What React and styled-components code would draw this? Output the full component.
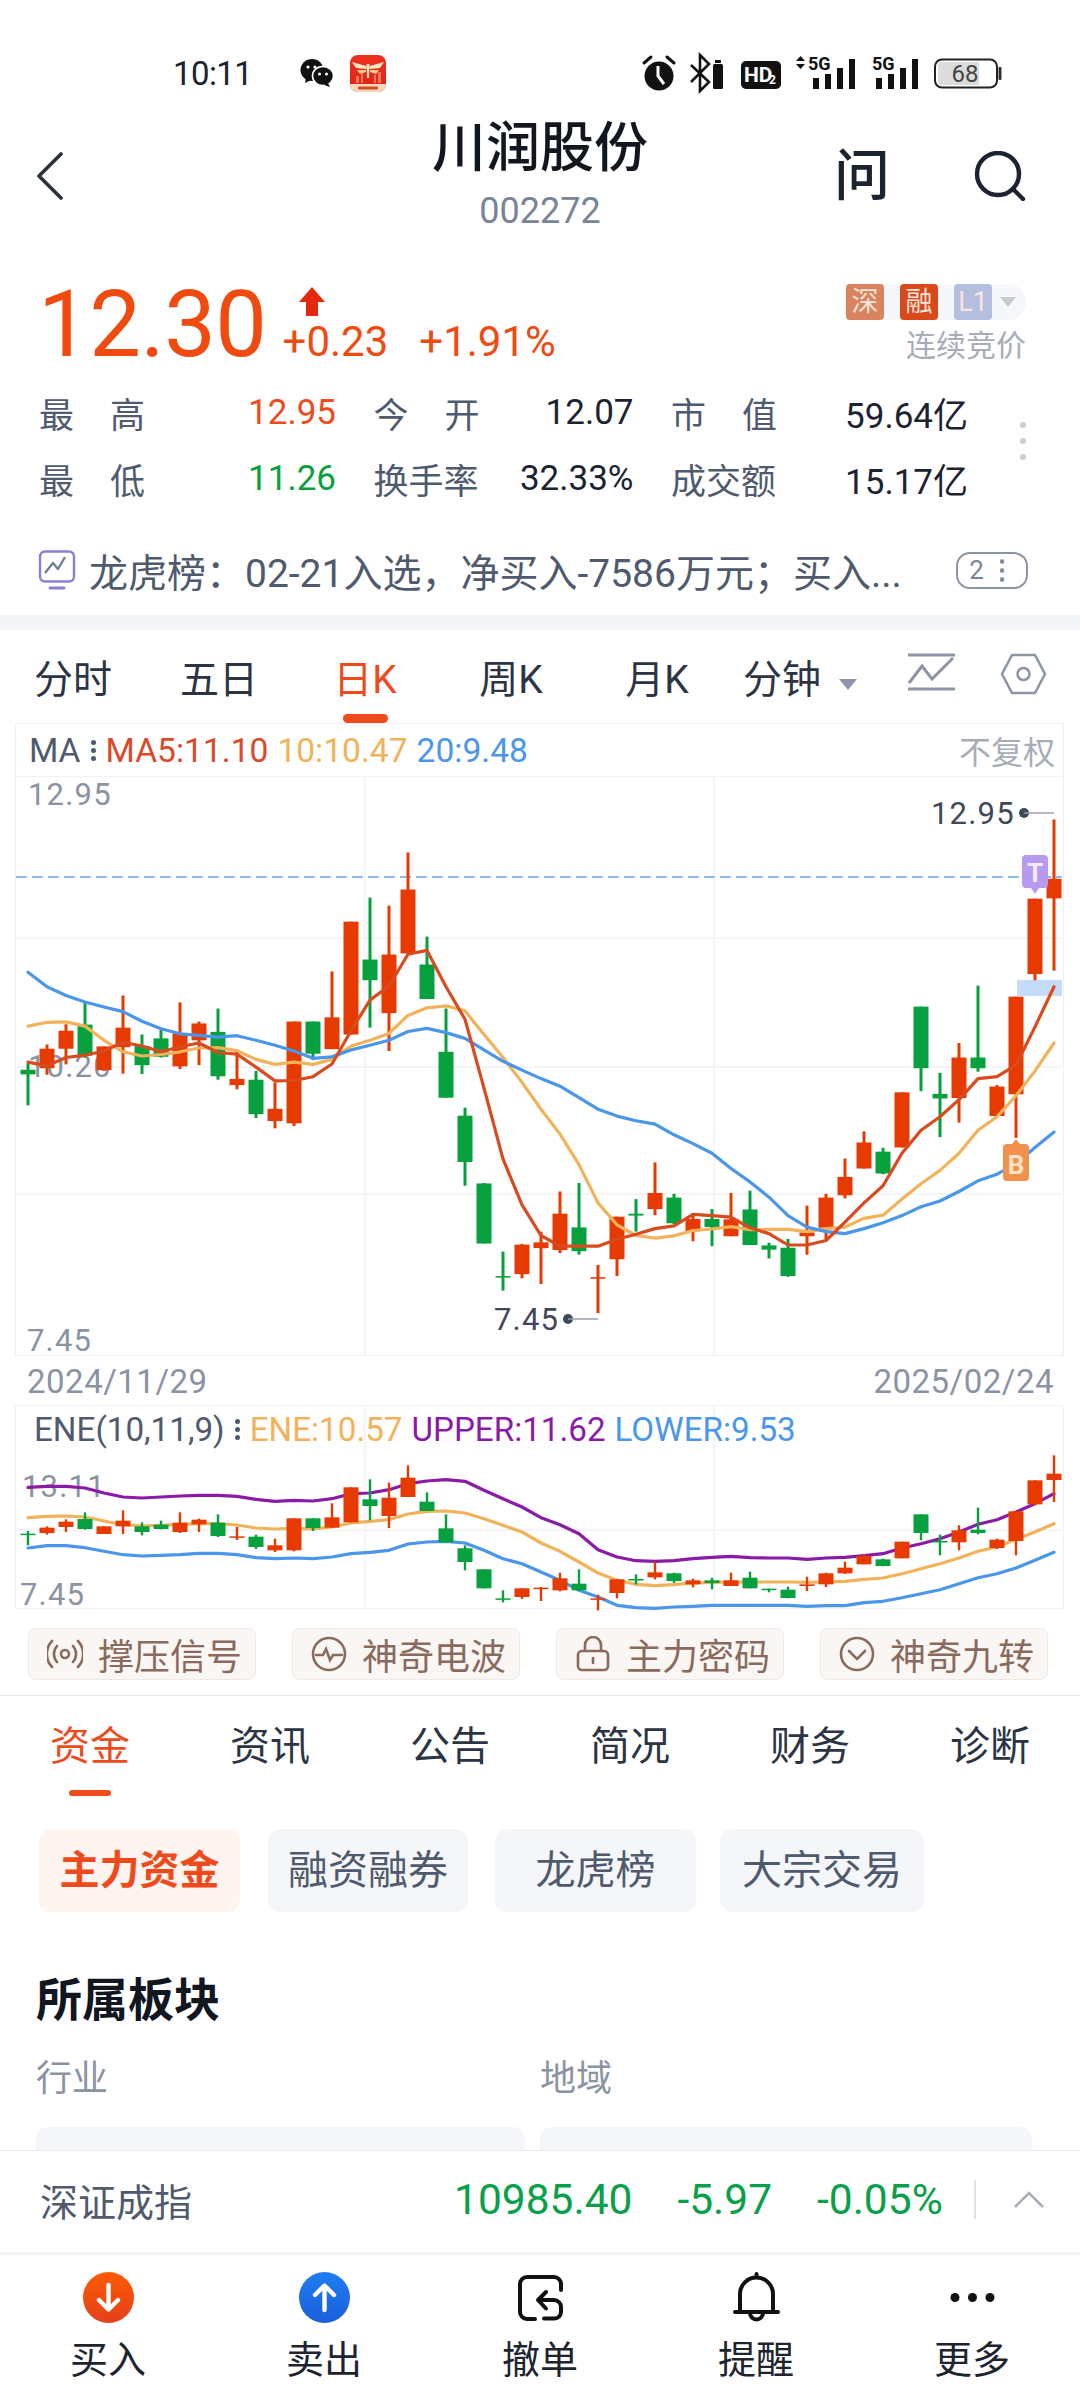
import React from "react";
import styled, { createGlobalStyle } from "styled-components";

const RED = "#e63a00";
const GREEN = "#06a13e";
const ACCENT = "#ee4a1c";
const INK = "#1b2230";
const SLATE = "#4f5a6e";
const MUTED = "#8a93a3";

const GlobalStyle = createGlobalStyle`
  html, body {
    margin: 0;
    padding: 0;
    background: #fff;
  }
  body {
    font-family: Roboto, "Noto Sans CJK SC", sans-serif;
    color: ${INK};
  }
`;

const Page = styled.div`
  width: 1080px;
  height: 2400px;
  display: flex;
  flex-direction: column;
  overflow: hidden;
  background: #fff;
`;

const Scroll = styled.div`
  height: 2150px;
  flex: none;
  overflow: hidden;
`;

/* status bar */
const StatusBar = styled.div`
  height: 46px;
  padding-top: 50px;
  display: flex;
  align-items: center;
`;
const Clock = styled.span`
  margin-left: 173px;
  width: 127px;
  font-size: 33px;
  letter-spacing: -0.6px;
`;
const AppSlot = styled.span`
  margin-left: 16px;
  display: flex;
`;
const StatusRight = styled.div`
  margin-left: auto;
  margin-right: 78px;
  display: flex;
  align-items: center;
`;

/* title */
const Header = styled.div`
  height: 150px;
  display: grid;
  grid-template-columns: 1fr auto 1fr;
  align-items: start;
`;
const HeaderLeft = styled.div`
  padding: 56px 0 0 36px;
`;
const HeaderRight = styled.div`
  padding: 52px 54px 0 0;
  display: flex;
  justify-content: flex-end;
  align-items: center;
  gap: 84px;
`;
const AskGlyph = styled.span`
  font-size: 56px;
  line-height: 56px;
  font-weight: 500;
`;
const TitleBlock = styled.div`
  padding-top: 23px;
  text-align: center;
`;
const Title = styled.div`
  font-size: 54px;
  line-height: 60px;
  font-weight: 500;
  color: #11161f;
`;
const Code = styled.div`
  margin-top: 12px;
  font-size: 36px;
  line-height: 40px;
  color: #7a8499;
`;

/* price */
const PriceRow = styled.div`
  height: 133px;
  padding: 0 54px 0 38px;
  display: flex;
  align-items: flex-start;
`;
const Price = styled.div`
  margin-top: 34px;
  font-size: 92px;
  line-height: 90px;
  letter-spacing: -0.5px;
  color: #f04a0e;
`;
const DeltaCol = styled.div`
  margin-left: 16px;
  padding-top: 41px;
`;
const ArrowSlot = styled.div`
  height: 33px;
  padding-left: 15px;
`;
const Deltas = styled.div`
  display: flex;
  gap: 31px;
  font-size: 42px;
  line-height: 44px;
  color: #f04a0e;
`;
const TagCol = styled.div`
  margin-left: auto;
  padding-top: 38px;
  text-align: right;
`;
const TagPill = styled.div`
  display: flex;
  width: 180px;
  height: 36px;
  gap: 16px;
  background: #f6f7fa;
  border-radius: 0 18px 18px 0;
  align-items: center;
`;
const Tag = styled.span`
  width: 38px;
  height: 36px;
  border-radius: 4px;
  background: ${(p) => p.$bg};
  color: #f8e6dc;
  font-size: 27px;
  line-height: 36px;
  text-align: center;
`;
const TagCaret = styled.span`
  margin-left: -8px;
  width: 0;
  height: 0;
  border-left: 8px solid transparent;
  border-right: 8px solid transparent;
  border-top: 10px solid #c5c9d2;
`;
const AuctionNote = styled.div`
  margin-top: 8px;
  font-size: 30px;
  line-height: 36px;
  color: #a6adb9;
`;

/* stats */
const Stats = styled.div`
  position: relative;
  padding-left: 40px;
`;
const StatRow = styled.div`
  height: 66px;
  display: grid;
  grid-template-columns: 296px 259px 296px;
  column-gap: 38.5px;
  align-items: center;
`;
const Pair = styled.div`
  display: flex;
  justify-content: space-between;
  align-items: center;
`;
const StatLabel = styled.span`
  width: 106px;
  margin-left: -1px;
  display: flex;
  justify-content: space-between;
  font-size: 35px;
  color: ${SLATE};
`;
const StatValue = styled.span`
  font-size: 35px;
  color: ${(p) => p.$color || INK};
`;
const MoreDots = styled.div`
  position: absolute;
  left: 1020px;
  top: 43px;
  display: flex;
  flex-direction: column;
  gap: 10px;
  span {
    width: 6px;
    height: 6px;
    border-radius: 50%;
    background: #c8cdd6;
  }
`;

/* rank notice */
const Notice = styled.div`
  height: 90px;
  padding: 14px 52px 0 38px;
  display: flex;
  align-items: center;
`;
const NoticeText = styled.span`
  margin-left: 13px;
  font-size: 39px;
  color: ${SLATE};
  white-space: nowrap;
`;
const NoticeBadge = styled.span`
  margin-left: auto;
  width: 68px;
  height: 33px;
  border: 2px solid #8c95a5;
  border-radius: 14px;
  display: flex;
  justify-content: center;
  align-items: center;
  gap: 5px;
  font-size: 26px;
  color: #7a8499;
`;
const Gap = styled.div`
  height: 15px;
  background: #f3f5f8;
`;

/* period tabs */
const PeriodBar = styled.div`
  height: 93px;
  display: flex;
  align-items: flex-start;
`;
const PeriodTab = styled.div`
  position: relative;
  width: 146px;
  flex: none;
  height: 93px;
  line-height: 100px;
  text-align: center;
  font-size: 39px;
  color: ${(p) => (p.$active ? ACCENT : "#2c3444")};
  ${(p) =>
    p.$active &&
    `&::after {
      content: "";
      position: absolute;
      left: 50%;
      margin-left: -22px;
      top: 84px;
      width: 45px;
      height: 9px;
      border-radius: 5px;
      background: ${ACCENT};
    }`}
`;
const MinuteTab = styled(PeriodTab)`
  margin-left: -3px;
  margin-right: 3px;
`;
const Caret = styled.span`
  display: inline-block;
  margin-left: 18px;
  vertical-align: 3px;
  width: 0;
  height: 0;
  border-left: 9px solid transparent;
  border-right: 9px solid transparent;
  border-top: 11px solid #8c95a5;
`;
const PeriodIcons = styled.div`
  margin-left: 31px;
  padding-top: 23px;
  display: flex;
  gap: 45px;
`;

/* chart frames */
const ChartFrame = styled.div`
  margin-left: 15px;
  width: 1049px;
  box-sizing: border-box;
  border: 1.5px solid #eff1f4;
`;
const LegendBar = styled.div`
  height: 52px;
  padding: 0 8px 0 13px;
  display: flex;
  align-items: center;
  font-size: 33.6px;
  white-space: nowrap;
  border-bottom: 1.5px solid #eff1f4;
`;
const LegendItem = styled.span`
  margin-right: ${(p) => (p.$gap === undefined ? 9 : p.$gap)}px;
  color: ${(p) => p.$color};
`;
const LegendDots = styled.span`
  display: inline-flex;
  flex-direction: column;
  gap: 3px;
  margin: 0 10px;
  span {
    width: 5px;
    height: 5px;
    border-radius: 50%;
    background: ${SLATE};
  }
`;
const Adjust = styled.span`
  margin-left: auto;
  font-size: 32px;
  color: #a6adb9;
`;
const Plot = styled.svg`
  display: block;
  overflow: visible;
`;
const DateRow = styled.div`
  height: 48.5px;
  box-sizing: border-box;
  padding: 3px 26px 0 27px;
  display: flex;
  justify-content: space-between;
  align-items: center;
  font-size: 33px;
  letter-spacing: 0.5px;
  color: ${MUTED};
`;
const OverlayFrame = styled(ChartFrame)`
  position: relative;
  height: 204px;
`;
const OverlayLegend = styled.div`
  position: absolute;
  left: 18px;
  top: 4px;
  display: flex;
  align-items: center;
  font-size: 33.2px;
  line-height: 40px;
  white-space: nowrap;
`;

/* signal buttons */
const SignalRow = styled.div`
  height: 87px;
  padding: 19px 0 0 28px;
  box-sizing: border-box;
  display: flex;
  gap: 36px;
  border-bottom: 1.5px solid #e6e8ec;
`;
const SignalButton = styled.div`
  width: 228px;
  height: 52px;
  box-sizing: border-box;
  padding-left: 18px;
  display: flex;
  align-items: center;
  gap: 15px;
  background: #faf6f4;
  border: 1.5px solid #efe8e4;
  border-radius: 8px;
  font-size: 36px;
  color: #8a6a5c;
  white-space: nowrap;
`;

/* section tabs */
const SectionTabs = styled.div`
  display: grid;
  grid-template-columns: repeat(6, 180px);
`;
const SectionTab = styled.div`
  position: relative;
  height: 133px;
  line-height: 102px;
  text-align: center;
  font-size: 40px;
  color: ${(p) => (p.$active ? ACCENT : "#2c3444")};
  ${(p) =>
    p.$active &&
    `&::after {
      content: "";
      position: absolute;
      left: 69px;
      top: 94px;
      width: 42px;
      height: 6px;
      border-radius: 3px;
      background: ${ACCENT};
    }`}
`;
const ChipRow = styled.div`
  padding-left: 39px;
  display: flex;
`;
const Chip = styled.div`
  width: ${(p) => p.$w}px;
  height: 83px;
  margin-right: ${(p) => p.$gap}px;
  border-radius: 12px;
  background: ${(p) => (p.$active ? "#fff5f0" : "#f4f6fa")};
  color: ${(p) => (p.$active ? ACCENT : SLATE)};
  font-size: 40px;
  font-weight: ${(p) => (p.$active ? 700 : 400)};
  line-height: 83px;
  text-align: center;
`;
const SectionHeading = styled.div`
  margin: 58px 0 0 36px;
  font-size: 46px;
  line-height: 60px;
  font-weight: 700;
  color: #11161f;
`;
const BoardGrid = styled.div`
  margin-top: 27px;
  padding-left: 36px;
  display: grid;
  grid-template-columns: 489px 492px;
  column-gap: 15px;
`;
const BoardLabel = styled.div`
  font-size: 36px;
  line-height: 44px;
  color: ${MUTED};
`;
const BoardCard = styled.div`
  margin-top: 26px;
  height: 120px;
  background: #f4f6fa;
  border-radius: 12px;
`;

/* index strip */
const IndexBar = styled.div`
  height: 97px;
  flex: none;
  padding: 0 34px 4px 40px;
  display: flex;
  align-items: center;
  white-space: nowrap;
  background: #fff;
  border-top: 1.5px solid #e6e8ec;
  border-bottom: 3px solid #f0f2f5;
`;
const IndexName = styled.span`
  font-size: 38px;
  color: ${SLATE};
`;
const IndexFigure = styled.span`
  margin-left: ${(p) => p.$gap}px;
  font-size: 42.5px;
  color: #08a04a;
`;
const IndexDivider = styled.span`
  margin: 0 37px 0 31px;
  width: 2px;
  height: 39px;
  background: #dfe2e8;
`;

/* bottom nav */
const BottomNav = styled.div`
  flex: 1;
  display: grid;
  grid-template-columns: repeat(5, 216px);
`;
const NavItem = styled.div`
  padding-top: 17px;
  display: flex;
  flex-direction: column;
  align-items: center;
  font-size: 38px;
  color: #1d2430;
`;
const NavIcon = styled.div`
  height: 51px;
  margin-bottom: 6px;
`;

const rawCandles = [
  [765, 782, 794, 875, "g"], [716, 727, 778, 795, "r"], [663, 680, 727, 768, "r"], [605, 664, 745, 750, "g"],
  [721, 721, 783, 785, "r"], [588, 672, 723, 792, "r"], [690, 720, 770, 793, "g"], [678, 700, 748, 750, "g"],
  [606, 687, 773, 780, "r"], [656, 661, 705, 770, "r"], [622, 683, 799, 808, "g"], [735, 806, 822, 833, "r"],
  [785, 808, 898, 908, "g"], [815, 884, 916, 935, "r"], [656, 656, 922, 929, "r"], [656, 656, 740, 757, "g"],
  [525, 645, 728, 728, "r"], [395, 395, 690, 690, "r"], [332, 494, 548, 672, "g"], [353, 481, 634, 733, "r"],
  [214, 311, 478, 478, "r"], [434, 507, 597, 597, "g"], [622, 735, 855, 855, "g"], [881, 902, 1023, 1085, "g"],
  [1078, 1079, 1236, 1236, "g"], [1257, 1321, 1325, 1359, "g"], [1237, 1239, 1316, 1327, "r"], [1205, 1233, 1248, 1342, "r"],
  [1100, 1158, 1253, 1261, "r"], [1078, 1194, 1256, 1265, "g"], [1292, 1324, 1328, 1418, "r"], [1166, 1166, 1277, 1321, "r"],
  [1120, 1158, 1163, 1205, "g"], [1024, 1104, 1146, 1162, "r"], [1106, 1116, 1183, 1185, "g"], [1157, 1172, 1204, 1230, "r"],
  [1146, 1172, 1193, 1243, "g"], [1104, 1173, 1217, 1217, "r"], [1098, 1147, 1240, 1240, "g"], [1234, 1241, 1252, 1275, "g"],
  [1224, 1247, 1321, 1323, "g"], [1137, 1207, 1217, 1265, "r"], [1106, 1116, 1195, 1225, "r"], [1014, 1062, 1110, 1118, "r"],
  [943, 972, 1040, 1040, "r"], [986, 996, 1053, 1055, "g"], [841, 841, 985, 985, "r"], [617, 617, 778, 838, "g"],
  [790, 845, 857, 958, "g"], [712, 750, 856, 920, "r"], [562, 750, 778, 787, "g"], [822, 826, 903, 903, "r"],
  [591, 591, 846, 960, "r"], [335, 335, 532, 548, "r"], [128, 283, 334, 523, "r"],
];
const ma5 = [762, 772, 750, 744, 733, 710, 720, 735, 722, 712, 737, 741, 775, 811, 810, 800, 767, 680, 600, 563, 480, 470, 565, 650, 830, 1015, 1135, 1215, 1243, 1243, 1243, 1225, 1212, 1197, 1190, 1160, 1163, 1167, 1195, 1210, 1240, 1240, 1228, 1180, 1130, 1085, 1000, 940, 905, 860, 805, 800, 770, 670, 565];
const ma10 = [668, 658, 657, 668, 705, 735, 746, 742, 735, 725, 724, 732, 755, 768, 762, 768, 755, 720, 705, 687, 640, 620, 615, 628, 690, 750, 815, 885, 950, 1030, 1130, 1187, 1215, 1222, 1216, 1202, 1198, 1192, 1200, 1199, 1199, 1205, 1197, 1193, 1170, 1162, 1120, 1080, 1045, 1000, 940, 905, 850, 785, 712];
const ma20 = [527, 565, 588, 605, 618, 630, 655, 675, 688, 692, 697, 693, 705, 718, 733, 752, 748, 730, 718, 705, 682, 674, 685, 700, 730, 760, 783, 805, 825, 855, 885, 903, 915, 924, 952, 975, 1000, 1040, 1075, 1115, 1163, 1193, 1205, 1210, 1197, 1182, 1163, 1140, 1125, 1100, 1072, 1055, 1028, 985, 945];

const rawEne = [
  [422, 430, 433, 465, "g"], [408, 412, 428, 433, "r"], [387, 394, 410, 425, "r"], [366, 386, 416, 418, "g"],
  [408, 408, 431, 431, "r"], [360, 391, 408, 431, "r"], [396, 408, 425, 435, "g"], [391, 403, 416, 417, "g"],
  [366, 397, 425, 428, "r"], [385, 388, 402, 425, "r"], [372, 397, 437, 440, "g"], [410, 438, 442, 449, "r"],
  [433, 439, 470, 476, "g"], [445, 465, 480, 485, "r"], [384, 384, 480, 483, "r"], [384, 384, 413, 422, "g"],
  [339, 381, 412, 412, "r"], [291, 291, 396, 396, "r"], [267, 327, 347, 390, "g"], [277, 322, 377, 413, "r"],
  [225, 262, 320, 320, "r"], [306, 334, 362, 362, "g"], [372, 414, 456, 456, "g"], [465, 474, 515, 540, "g"],
  [537, 537, 594, 594, "g"], [600, 624, 627, 636, "g"], [594, 594, 620, 626, "r"], [590, 592, 595, 632, "r"],
  [547, 564, 600, 603, "r"], [537, 580, 600, 602, "g"], [613, 624, 627, 660, "r"], [567, 567, 608, 624, "r"],
  [552, 566, 569, 582, "g"], [515, 546, 561, 567, "r"], [547, 549, 572, 578, "g"], [565, 570, 582, 591, "r"],
  [562, 570, 578, 597, "g"], [547, 570, 587, 587, "r"], [544, 562, 594, 594, "g"], [595, 595, 599, 606, "g"],
  [589, 598, 623, 624, "g"], [559, 582, 587, 602, "r"], [547, 549, 582, 590, "r"], [514, 532, 549, 551, "r"],
  [491, 497, 522, 522, "r"], [505, 507, 527, 528, "g"], [454, 454, 504, 504, "r"], [372, 372, 428, 450, "g"],
  [433, 452, 455, 495, "g"], [405, 420, 456, 480, "r"], [352, 418, 428, 432, "g"], [445, 448, 473, 476, "r"],
  [363, 363, 452, 495, "r"], [270, 270, 342, 345, "r"], [195, 250, 269, 335, "r"],
];
const upper = [291, 288, 288, 293, 308, 320, 323, 320, 317, 315, 315, 318, 327, 333, 330, 332, 325, 310, 308, 298, 280, 272, 268, 273, 300, 325, 350, 382, 403, 430, 478, 500, 511, 513, 511, 505, 501, 498, 502, 503, 503, 507, 503, 501, 496, 490, 473, 460, 445, 425, 402, 388, 365, 340, 310];
const eneMid = [382, 378, 377, 380, 392, 403, 407, 405, 402, 400, 400, 404, 413, 416, 414, 416, 410, 398, 393, 388, 371, 363, 362, 368, 385, 405, 425, 458, 483, 515, 548, 570, 582, 586, 583, 578, 576, 575, 575, 575, 575, 576, 575, 573, 567, 563, 550, 535, 520, 503, 483, 470, 447, 425, 400];
const lower = [473, 466, 466, 472, 483, 493, 497, 495, 493, 489, 489, 493, 502, 505, 503, 505, 500, 490, 486, 480, 461, 455, 453, 458, 480, 505, 520, 545, 570, 600, 620, 645, 652, 654, 650, 648, 645, 645, 645, 645, 645, 648, 646, 646, 637, 633, 622, 610, 598, 580, 562, 550, 533, 510, 486];

const candleX = (i) => 12 + 19 * i;
const mainY = (v) => (v - 17) / 2.613;
const eneY = (v) => (v - 47) / 3;

function Candles({ data, toY, wick }) {
  return data.map(([wt, bt, bb, wb, c], i) => {
    const color = c === "r" ? RED : GREEN;
    const x = candleX(i);
    return (
      <g key={i} fill={color}>
        <rect x={x - wick / 2} y={toY(wt)} width={wick} height={toY(wb) - toY(wt)} />
        <rect x={x - 7.5} y={toY(bt)} width={15} height={Math.max(toY(bb) - toY(bt), 1.5)} />
      </g>
    );
  });
}

function Line({ values, toY, color }) {
  const pts = values.map((v, i) => `${candleX(i)},${toY(v).toFixed(1)}`).join(" ");
  return <polyline points={pts} fill="none" stroke={color} strokeWidth="3.2" strokeLinejoin="round" strokeLinecap="round" />;
}

function GridLines({ height, rows }) {
  return (
    <g stroke="#f0f2f5" strokeWidth="1.5">
      {rows.map((y) => (
        <line key={y} x1="0" x2="1046" y1={y} y2={y} />
      ))}
      <line x1="349" x2="349" y1="0" y2={height} />
      <line x1="698" x2="698" y1="0" y2={height} />
    </g>
  );
}

const axisText = { fontFamily: "Roboto, sans-serif", fontSize: 31, letterSpacing: 1.2 };

function MainChart() {
  return (
    <Plot width="1046" height="578" viewBox="0 0 1046 578">
      <GridLines height={578} rows={[161, 290, 417]} />
      <text x="12" y="28" fill={MUTED} {...axisText}>12.95</text>
      <text x="12" y="300" fill={MUTED} {...axisText}>10.20</text>
      <text x="11" y="574" fill={MUTED} {...axisText}>7.45</text>
      <line x1="0" x2="1046" y1="100" y2="100" stroke="#8cbcf0" strokeWidth="2" strokeDasharray="11 5" />
      <rect x="1001" y="203" width="45" height="16" fill="#c5dcf8" />
      <Candles data={rawCandles} toY={mainY} wick={3} />
      <Line values={ma10} toY={mainY} color="#f2b25a" />
      <Line values={ma20} toY={mainY} color="#4a96ea" />
      <Line values={ma5} toY={mainY} color="#d94a1e" />
      <g>
        <path d="M1010 78h18a4 4 0 0 1 4 4v25a4 4 0 0 1-4 4h-5l-4 6-4-6h-5a4 4 0 0 1-4-4V82a4 4 0 0 1 4-4z" fill="#b79af0" />
        <text x="1019" y="105" textAnchor="middle" fill="#f3ecff" fontFamily="Roboto, sans-serif" fontWeight="700" fontSize="26">T</text>
      </g>
      <g>
        <path d="M991 367h5l4-5 4 5h5a4 4 0 0 1 4 4v29a4 4 0 0 1-4 4h-18a4 4 0 0 1-4-4v-29a4 4 0 0 1 4-4z" fill="#f0914d" />
        <text x="1000" y="397" textAnchor="middle" fill="#fbe3c8" fontFamily="Roboto, sans-serif" fontWeight="700" fontSize="26">B</text>
      </g>
      <text x="915" y="47" fill="#3f4858" {...axisText}>12.95</text>
      <circle cx="1008" cy="36" r="5" fill="#3f4858" />
      <line x1="1008" x2="1038" y1="36" y2="36" stroke="#9aa1ad" strokeWidth="1.5" />
      <text x="478" y="553" fill="#3f4858" {...axisText}>7.45</text>
      <circle cx="552" cy="542" r="5" fill="#3f4858" />
      <line x1="552" x2="582" y1="542" y2="542" stroke="#9aa1ad" strokeWidth="1.5" />
    </Plot>
  );
}

function EneChart() {
  return (
    <Plot width="1046" height="201" viewBox="0 0 1046 201">
      <GridLines height={201} rows={[124]} />
      <text x="6" y="91" fill={MUTED} {...axisText}>13.11</text>
      <text x="4" y="199" fill={MUTED} {...axisText}>7.45</text>
      <Line values={upper} toY={eneY} color="#8a1ba6" />
      <Line values={eneMid} toY={eneY} color="#f2b25a" />
      <Line values={lower} toY={eneY} color="#4a96ea" />
      <Candles data={rawEne} toY={eneY} wick={2.4} />
    </Plot>
  );
}

const WeChatIcon = () => (
  <svg width="34" height="30" viewBox="0 0 34 30">
    <ellipse cx="12" cy="12" rx="11.5" ry="11" fill="#111" />
    <path d="M6 20l-1 5 6-3z" fill="#111" />
    <ellipse cx="23" cy="18" rx="10.5" ry="9.6" fill="#111" stroke="#fff" strokeWidth="1.6" />
    <path d="M28 25l2 4-6-2z" fill="#111" />
    <circle cx="8" cy="9" r="1.6" fill="#fff" />
    <circle cx="15" cy="9" r="1.6" fill="#fff" />
    <circle cx="19.5" cy="16" r="1.5" fill="#fff" />
    <circle cx="26.5" cy="16" r="1.5" fill="#fff" />
  </svg>
);

const AppIcon = () => (
  <svg width="36" height="37" viewBox="0 0 36 37">
    <defs>
      <linearGradient id="appRed" x1="0" y1="0" x2="0" y2="1">
        <stop offset="0" stopColor="#f0301c" />
        <stop offset="1" stopColor="#d92418" />
      </linearGradient>
    </defs>
    <rect width="36" height="37" rx="8" fill="url(#appRed)" />
    <path d="M0 29h36a8 8 0 0 1-8 8H8a8 8 0 0 1-8-8z" fill="#f9d9b8" />
    <path d="M2 7l14.5 4v3L6 13zM34 7l-14.5 4v3L30 13z" fill="#fbe7c0" />
    <path d="M16.5 9h3l-.6 14h-1.8z" fill="#fbe7c0" />
    <path d="M7 15h9v2l-6 2zM29 15h-9v2l6 2z" fill="#f6c88e" />
    <path d="M6 21h3v7H6zM11 18h2v10h-2zM24 20h2v8h-2zM28 17h3v11h-3z" fill="#f2745a" />
    <rect x="8" y="31.5" width="20" height="3" rx="1" fill="#d9442a" />
  </svg>
);

const signalHeights = [11, 15, 21, 30];

const StatusIcons = () => (
  <svg width="362" height="42" viewBox="0 0 362 42" fontFamily="Roboto, sans-serif">
    <circle cx="19" cy="24" r="14.5" fill="#111" />
    <path d="M4 11l7-6M34 11l-7-6" stroke="#111" strokeWidth="3" strokeLinecap="round" />
    <path d="M18 14v10l6 8" stroke="#fff" strokeWidth="3" fill="none" />
    <path d="M51 13l18 17-9 9V3l9 9-18 18" fill="none" stroke="#111" strokeWidth="2.6" />
    <rect x="73" y="12" width="10" height="25" rx="1.5" fill="#111" />
    <rect x="75" y="8" width="6" height="3" fill="#111" />
    <rect x="101" y="9" width="40" height="28" rx="5" fill="#111" />
    <text x="104" y="30" fontSize="21" fontWeight="700" fill="#fff">HD</text>
    <text x="129" y="32" fontSize="12" fontWeight="700" fill="#fff">2</text>
    <path d="M156 9l4.5-5 4.5 5zM156 12l4.5 5 4.5-5z" fill="#111" />
    <text x="168" y="18" fontSize="18" fontWeight="700" fill="#111">5G</text>
    {signalHeights.map((h, b) => (
      <rect key={b} x={173 + b * 12} y={37 - h} width="6" height={h} fill="#111" />
    ))}
    <text x="232" y="18" fontSize="18" fontWeight="700" fill="#111">5G</text>
    {signalHeights.map((h, b) => (
      <rect key={b} x={236 + b * 12} y={37 - h} width="6" height={h} fill="#111" />
    ))}
    <rect x="295" y="7.5" width="62" height="28" rx="7" fill="none" stroke="#222" strokeWidth="2" />
    <path d="M298 13a3 3 0 0 1 3-3h38v23h-38a3 3 0 0 1-3-3z" fill="#dcdcdc" />
    <text x="325" y="30" textAnchor="middle" fontSize="24" fill="#444">68</text>
    <rect x="358.5" y="15" width="3" height="13" rx="1" fill="#333" />
  </svg>
);

const BackIcon = () => (
  <svg width="28" height="48" viewBox="0 0 28 48">
    <path d="M25 2L3 24l22 22" fill="none" stroke="#2a303c" strokeWidth="3.6" strokeLinecap="round" strokeLinejoin="round" />
  </svg>
);

const SearchIcon = () => (
  <svg width="52" height="50" viewBox="0 0 52 50">
    <circle cx="24" cy="23" r="21" fill="none" stroke="#1b2230" strokeWidth="4.4" />
    <path d="M39 38l10 10" stroke="#1b2230" strokeWidth="4.4" strokeLinecap="round" />
  </svg>
);

const PriceArrow = () => (
  <svg width="28" height="29" viewBox="0 0 28 29">
    <path d="M14 0l13 15h-7v14H8V15H1z" fill="#e3280e" />
  </svg>
);

const RankIcon = () => (
  <svg width="38" height="40" viewBox="0 0 38 40" fill="none" stroke="#8d7fd6" strokeWidth="2.4">
    <rect x="2" y="1.5" width="34" height="30" rx="5" />
    <path d="M7 23l8-10 5 6 7-12" stroke="#6f7f9c" strokeLinejoin="round" />
    <path d="M12 38h14" strokeWidth="3" strokeLinecap="round" />
  </svg>
);

const TrendIcon = () => (
  <svg width="48" height="38" viewBox="0 0 48 38" fill="none" stroke="#8c95a5" strokeWidth="3">
    <path d="M1 2h47M1 36h47" />
    <path d="M2 30l13-17 10 13L46 5" />
  </svg>
);

const HexIcon = () => (
  <svg width="47" height="42" viewBox="0 0 47 42" fill="none" stroke="#8c95a5" strokeWidth="2.6">
    <path d="M12 2h23l10 19-10 19H12L2 21z" strokeLinejoin="round" />
    <circle cx="23.5" cy="21" r="6" />
  </svg>
);

const SignalIcon = ({ kind }) => {
  const s = { fill: "none", stroke: "#8a6a5c", strokeWidth: 2.6, strokeLinecap: "round" };
  return (
    <svg width="36" height="36" viewBox="0 0 36 36" {...s}>
      {kind === "radio" && (
        <>
          <circle cx="18" cy="18" r="4" />
          <path d="M10 10a12 12 0 0 0 0 16M26 10a12 12 0 0 1 0 16M5 5a19 19 0 0 0 0 26M31 5a19 19 0 0 1 0 26" />
        </>
      )}
      {kind === "wave" && (
        <>
          <circle cx="18" cy="18" r="16" />
          <path d="M5 19h7l3-6 4 11 3-5h9" />
        </>
      )}
      {kind === "lock" && (
        <>
          <rect x="3" y="15" width="30" height="19" rx="4" />
          <path d="M10 15V9a8 8 0 0 1 16 0v6M18 22v5" />
        </>
      )}
      {kind === "turn" && (
        <>
          <circle cx="18" cy="18" r="16" />
          <path d="M10 15l8 8 8-8" />
        </>
      )}
    </svg>
  );
};

const RoundArrow = ({ id, from, to, up }) => (
  <svg width="51" height="51" viewBox="0 0 51 51">
    <defs>
      <linearGradient id={id} x1="0" y1="0" x2="0" y2="1">
        <stop offset="0" stopColor={from} />
        <stop offset="1" stopColor={to} />
      </linearGradient>
    </defs>
    <circle cx="25.5" cy="25.5" r="25.5" fill={`url(#${id})`} />
    <path
      d={up ? "M25.5 38V14M16 23l9.5-9.5L35 23" : "M25.5 13v24M16 28l9.5 9.5L35 28"}
      fill="none"
      stroke="#fff"
      strokeWidth="4.4"
      strokeLinecap="round"
      strokeLinejoin="round"
    />
  </svg>
);

const CancelIcon = () => (
  <svg width="51" height="51" viewBox="0 0 51 51" fill="none" stroke="#111" strokeWidth="4" strokeLinecap="round" strokeLinejoin="round">
    <path d="M20 47h-8a7 7 0 0 1-7-7V12a7 7 0 0 1 7-7h27a7 7 0 0 1 7 7v6" />
    <path d="M31 20l-8 8 8 8.5M23 28h16a7 7 0 0 1 7 7v5a6.5 6.5 0 0 1-6.5 6.5H29" />
  </svg>
);

const BellIcon = () => (
  <svg width="51" height="51" viewBox="0 0 51 51" fill="none" stroke="#111" strokeWidth="4" strokeLinecap="round" strokeLinejoin="round">
    <path d="M4 40h43M9 40V22a16.5 16.5 0 0 1 33 0v18" />
    <path d="M25.5 2v3M19 41a6.5 6.5 0 0 0 13 0" />
  </svg>
);

const MoreIcon = () => (
  <svg width="51" height="51" viewBox="0 0 51 51" fill="#111">
    <circle cx="8" cy="25.5" r="4.5" />
    <circle cx="25.5" cy="25.5" r="4.5" />
    <circle cx="43" cy="25.5" r="4.5" />
  </svg>
);

const stats = [
  [
    ["最", "高", "12.95", "#ee4a1c"],
    ["今", "开", "12.07"],
    ["市", "值", "59.64亿"],
  ],
  [
    ["最", "低", "11.26", GREEN],
    ["换手率", null, "32.33%"],
    ["成交额", null, "15.17亿"],
  ],
];
const periods = ["分时", "五日", "日K", "周K", "月K"];
const signals = [
  ["radio", "撑压信号"],
  ["wave", "神奇电波"],
  ["lock", "主力密码"],
  ["turn", "神奇九转"],
];
const sections = ["资金", "资讯", "公告", "简况", "财务", "诊断"];
const chips = [
  ["主力资金", 201, 28],
  ["融资融券", 200, 27],
  ["龙虎榜", 201, 24],
  ["大宗交易", 204, 0],
];

const Dots = () => (
  <LegendDots>
    <span />
    <span />
    <span />
  </LegendDots>
);

export default function App() {
  return (
    <Page>
      <GlobalStyle />
      <Scroll>
        <StatusBar>
          <Clock>10:11</Clock>
          <WeChatIcon />
          <AppSlot>
            <AppIcon />
          </AppSlot>
          <StatusRight>
            <StatusIcons />
          </StatusRight>
        </StatusBar>
        <Header>
          <HeaderLeft>
            <BackIcon />
          </HeaderLeft>
          <TitleBlock>
            <Title>川润股份</Title>
            <Code>002272</Code>
          </TitleBlock>
          <HeaderRight>
            <AskGlyph>问</AskGlyph>
            <SearchIcon />
          </HeaderRight>
        </Header>
        <PriceRow>
          <Price>12.30</Price>
          <DeltaCol>
            <ArrowSlot>
              <PriceArrow />
            </ArrowSlot>
            <Deltas>
              <span>+0.23</span>
              <span>+1.91%</span>
            </Deltas>
          </DeltaCol>
          <TagCol>
            <TagPill>
              <Tag $bg="#d9835f">深</Tag>
              <Tag $bg="#d84a1c">融</Tag>
              <Tag $bg="#b4bfdf">L1</Tag>
              <TagCaret />
            </TagPill>
            <AuctionNote>连续竞价</AuctionNote>
          </TagCol>
        </PriceRow>
        <Stats>
          {stats.map((row, r) => (
            <StatRow key={r}>
              {row.map(([a, b, value, color]) => (
                <Pair key={value}>
                  <StatLabel>
                    <span>{a}</span>
                    {b && <span>{b}</span>}
                  </StatLabel>
                  <StatValue $color={color}>{value}</StatValue>
                </Pair>
              ))}
            </StatRow>
          ))}
          <MoreDots>
            <span />
            <span />
            <span />
          </MoreDots>
        </Stats>
        <Notice>
          <RankIcon />
          <NoticeText>龙虎榜：02-21入选，净买入-7586万元；买入...</NoticeText>
          <NoticeBadge>2 <b>⋮</b></NoticeBadge>
        </Notice>
        <Gap />
        <PeriodBar>
          {periods.map((p) => (
            <PeriodTab key={p} $active={p === "日K"}>{p}</PeriodTab>
          ))}
          <MinuteTab>分钟<Caret /></MinuteTab>
          <PeriodIcons>
            <TrendIcon />
            <HexIcon />
          </PeriodIcons>
        </PeriodBar>
        <ChartFrame>
          <LegendBar>
            <LegendItem $color={SLATE} $gap={0}>MA</LegendItem>
            <Dots />
            <LegendItem $color="#d9492a">MA5:11.10</LegendItem>
            <LegendItem $color="#f2b25a">10:10.47</LegendItem>
            <LegendItem $color="#4a96ea">20:9.48</LegendItem>
            <Adjust>不复权</Adjust>
          </LegendBar>
          <MainChart />
        </ChartFrame>
        <DateRow>
          <span>2024/11/29</span>
          <span>2025/02/24</span>
        </DateRow>
        <OverlayFrame>
          <EneChart />
          <OverlayLegend>
            <LegendItem $color={SLATE} $gap={0}>ENE(10,11,9)</LegendItem>
            <Dots />
            <LegendItem $color="#f2b25a">ENE:10.57</LegendItem>
            <LegendItem $color="#8a1ba6">UPPER:11.62</LegendItem>
            <LegendItem $color="#4a96ea">LOWER:9.53</LegendItem>
          </OverlayLegend>
        </OverlayFrame>
        <SignalRow>
          {signals.map(([kind, label]) => (
            <SignalButton key={label}>
              <SignalIcon kind={kind} />
              {label}
            </SignalButton>
          ))}
        </SignalRow>
        <SectionTabs>
          {sections.map((s) => (
            <SectionTab key={s} $active={s === "资金"}>{s}</SectionTab>
          ))}
        </SectionTabs>
        <ChipRow>
          {chips.map(([label, w, gap]) => (
            <Chip key={label} $w={w} $gap={gap} $active={label === "主力资金"}>{label}</Chip>
          ))}
        </ChipRow>
        <SectionHeading>所属板块</SectionHeading>
        <BoardGrid>
          <div>
            <BoardLabel>行业</BoardLabel>
            <BoardCard />
          </div>
          <div>
            <BoardLabel>地域</BoardLabel>
            <BoardCard />
          </div>
        </BoardGrid>
      </Scroll>
      <IndexBar>
        <IndexName>深证成指</IndexName>
        <IndexFigure $gap={262}>10985.40</IndexFigure>
        <IndexFigure $gap={45}>-5.97</IndexFigure>
        <IndexFigure $gap={45}>-0.05%</IndexFigure>
        <IndexDivider />
        <svg width="32" height="18" viewBox="0 0 32 18">
          <path d="M2 16L16 2l14 14" fill="none" stroke="#a6adb9" strokeWidth="2.6" />
        </svg>
      </IndexBar>
      <BottomNav>
        <NavItem>
          <NavIcon><RoundArrow id="buyGrad" from="#fb5a05" to="#e6401a" /></NavIcon>
          买入
        </NavItem>
        <NavItem>
          <NavIcon><RoundArrow id="sellGrad" from="#1f7df2" to="#1a5fdc" up /></NavIcon>
          卖出
        </NavItem>
        <NavItem>
          <NavIcon><CancelIcon /></NavIcon>
          撤单
        </NavItem>
        <NavItem>
          <NavIcon><BellIcon /></NavIcon>
          提醒
        </NavItem>
        <NavItem>
          <NavIcon><MoreIcon /></NavIcon>
          更多
        </NavItem>
      </BottomNav>
    </Page>
  );
}
